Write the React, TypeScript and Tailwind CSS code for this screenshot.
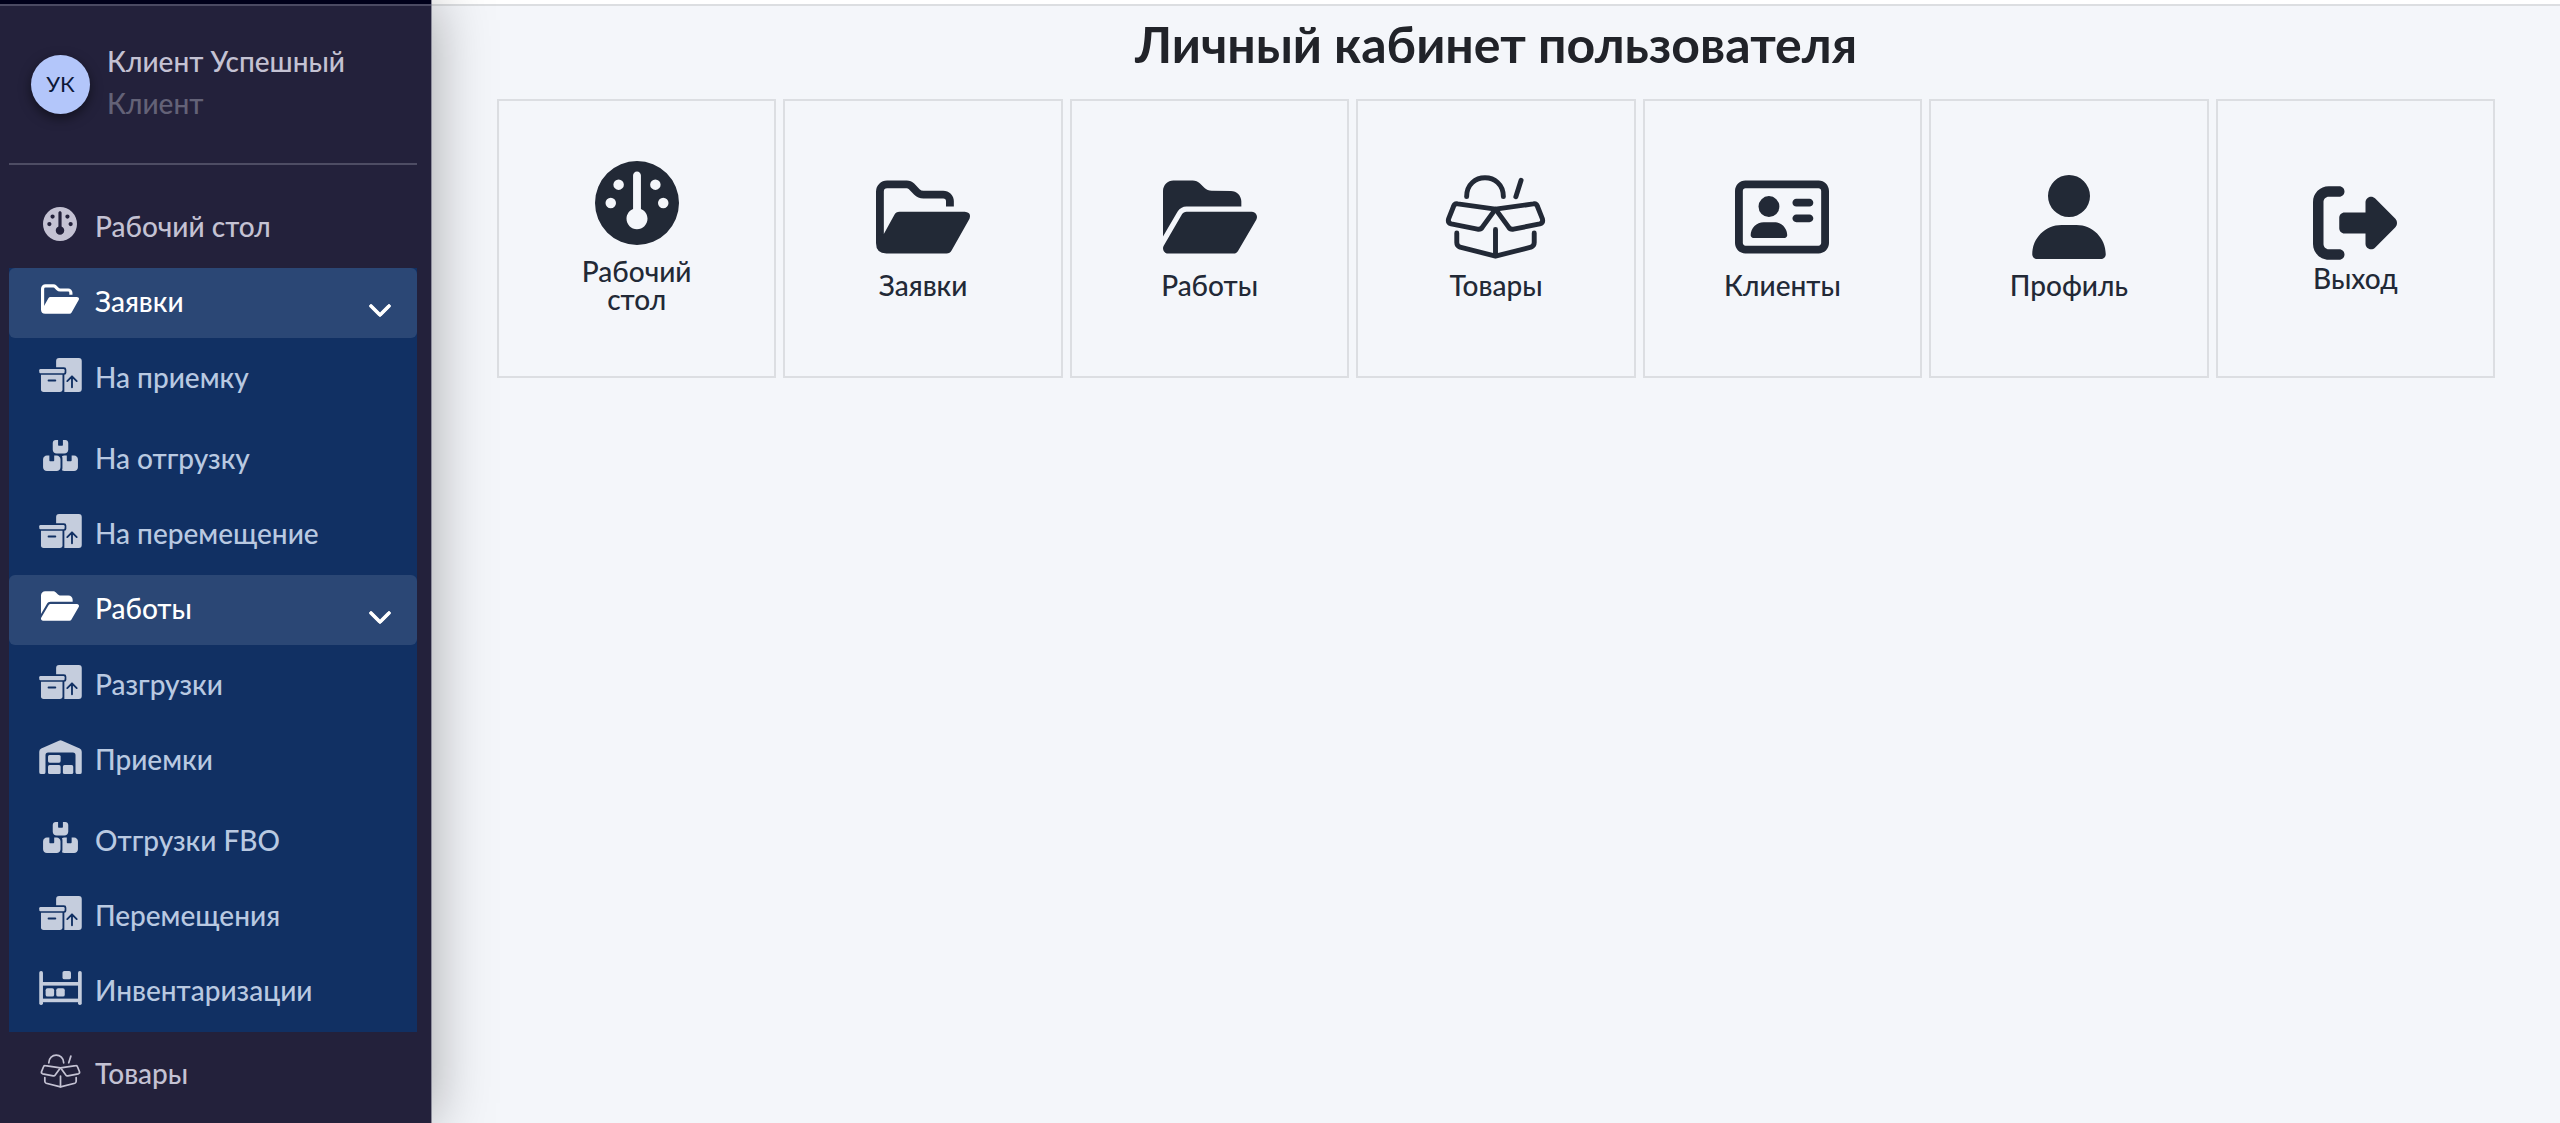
import { useState } from "react";
import type { ReactNode } from "react";
import {
  FaBoxesStacked,
  FaChevronDown,
  FaFolderOpen,
  FaGauge,
  FaRegAddressCard,
  FaRightFromBracket,
  FaUser,
} from "react-icons/fa6";

type IconProps = { className?: string };

function FolderOutline({ className }: IconProps) {
  return (
    <svg viewBox="0 0 576 512" className={className} fill="currentColor" aria-hidden="true">
      <path
        d="M24 410V100a44 44 0 0 1 44-44H188q17 0 29 12L250 102q17 17 41 17H412a41 41 0 0 1 41 41v32"
        fill="none"
        stroke="currentColor"
        strokeWidth="48"
      />
      <path d="M48 360L112 243Q122 224 144 224H544Q586 228 573 266L464 460Q453 480 432 480H64Q0 480 0 416V370Z" />
    </svg>
  );
}

function OpenBox({ className }: IconProps) {
  return (
    <svg
      viewBox="48 44 304 256"
      className={className}
      fill="none"
      stroke="currentColor"
      strokeLinecap="round"
      strokeLinejoin="round"
      aria-hidden="true"
    >
      <path d="M112 110C112 33 224 33 224 110" />
      <path d="M278 60L262 110" />
      <path d="M200 148L85 132Q75 130 72 140L57 178Q54 190 65 193L145 209Q155 211 160 203Z" />
      <path d="M200 148L315 132Q325 130 328 140L343 178Q346 190 335 193L255 209Q245 211 240 203Z" />
      <path d="M82 221V250Q82 260 92 264L200 291L308 264Q318 260 318 250V221" />
      <path d="M200 210V290" />
    </svg>
  );
}

function Packages({ className }: IconProps) {
  return (
    <svg viewBox="0 0 640 512" className={className} fill="currentColor" aria-hidden="true">
      <path d="M254 140V44Q254 0 298 0H596Q640 0 640 44V468Q640 512 596 512H378V254Q408 250 408 222V176Q408 140 372 140Z" />
      <rect x="0" y="166" width="382" height="62" rx="18" />
      <path d="M26 252H350V472Q350 512 310 512H66Q26 512 26 472Z" />
      <g stroke="#113063" strokeWidth="28" strokeLinecap="round" strokeLinejoin="round" fill="none">
        <path d="M140 338H242" />
        <path d="M493 440V278M422 348L493 276L564 348" />
      </g>
    </svg>
  );
}

function Warehouse({ className }: IconProps) {
  return (
    <svg viewBox="0 0 640 512" className={className} fill="currentColor" aria-hidden="true">
      <path d="M0 484V176Q0 142 30 128L296 10Q320 0 344 10L610 128Q640 142 640 176V484Q640 512 612 512H574Q546 512 546 484V230Q546 190 506 190H134Q94 190 94 230V484Q94 512 66 512H28Q0 512 0 484Z" />
      <rect x="132" y="224" width="190" height="118" rx="24" />
      <rect x="132" y="378" width="190" height="134" rx="24" />
      <rect x="356" y="378" width="156" height="134" rx="24" />
    </svg>
  );
}

function Shelves({ className }: IconProps) {
  return (
    <svg viewBox="0 0 640 512" className={className} fill="currentColor" aria-hidden="true">
      <rect x="0" y="0" width="56" height="512" rx="26" />
      <rect x="584" y="0" width="56" height="512" rx="26" />
      <rect x="28" y="166" width="584" height="54" />
      <rect x="28" y="416" width="584" height="54" />
      <rect x="350" y="0" width="128" height="124" rx="28" />
      <rect x="96" y="260" width="128" height="124" rx="28" />
      <rect x="256" y="260" width="128" height="124" rx="28" />
    </svg>
  );
}

function Row({ icon, children }: { icon: ReactNode; children: ReactNode }) {
  return (
    <span className="flex h-[61px] items-center gap-[13px] pl-[29px]">
      <span className="flex w-11 shrink-0 justify-center">{icon}</span>
      <span className="mt-1">{children}</span>
    </span>
  );
}

type Item = { label: string; icon: ReactNode; tall?: boolean };

const wideIcon = "h-[34px] w-[43px] text-[#c5cddd]";
const stack = <FaBoxesStacked className="h-[31px] w-[35px] text-[#c5cddd]" />;

const requests: Item[] = [
  { label: "На приемку", icon: <Packages className={wideIcon} /> },
  { label: "На отгрузку", icon: stack, tall: true },
  { label: "На перемещение", icon: <Packages className={wideIcon} /> },
];

const works: Item[] = [
  { label: "Разгрузки", icon: <Packages className={wideIcon} /> },
  { label: "Приемки", icon: <Warehouse className={wideIcon} /> },
  { label: "Отгрузки FBO", icon: stack, tall: true },
  { label: "Перемещения", icon: <Packages className={wideIcon} /> },
  { label: "Инвентаризации", icon: <Shelves className={wideIcon} /> },
];

function Group({ title, icon, items }: { title: string; icon: ReactNode; items: Item[] }) {
  const [open, setOpen] = useState(true);
  return (
    <div className="bg-[#113063]">
      <button
        type="button"
        aria-expanded={open}
        onClick={() => setOpen(!open)}
        className="flex h-[70px] w-full cursor-pointer items-start justify-between rounded-md bg-[#2b4775] pr-[25px] text-left text-white"
      >
        <Row icon={icon}>{title}</Row>
        <FaChevronDown className="mt-[29px] size-6 stroke-white stroke-[20]" />
      </button>
      {open && (
        <ul className="pb-[6px] text-[#b9c9e1]">
          {items.map((item) => (
            <li key={item.label}>
              <a href="#" className={item.tall ? "block pt-3 pb-2" : "block pt-[6px] pb-2"}>
                <Row icon={item.icon}>{item.label}</Row>
              </a>
            </li>
          ))}
        </ul>
      )}
    </div>
  );
}

const wideTile = "h-[84px] w-[94px]";

const tiles: { label: string; icon: ReactNode; tight?: boolean }[] = [
  { label: "Рабочий стол", icon: <FaGauge className="size-[84px]" /> },
  { label: "Заявки", icon: <FolderOutline className={wideTile} /> },
  { label: "Работы", icon: <FaFolderOpen className={wideTile} /> },
  { label: "Товары", icon: <OpenBox className="h-[84px] w-[101px] stroke-15" /> },
  { label: "Клиенты", icon: <FaRegAddressCard className={wideTile} /> },
  { label: "Профиль", icon: <FaUser className="h-[84px] w-[74px]" /> },
  {
    label: "Выход",
    icon: <FaRightFromBracket className="h-[74px] w-[84px]" preserveAspectRatio="xMidYMid slice" />,
    tight: true,
  },
];

export default function App() {
  return (
    <div className="flex min-h-screen bg-[#f4f6fa] font-['Lato',sans-serif] text-[28px] font-medium">
      <aside className="relative z-10 w-[432px] shrink-0 border-r border-[#8d8d9b] bg-[#23213b] text-[#c4c2d3] shadow-[0_0_56px_rgba(0,0,0,0.34)]">
        <div className="h-1 bg-[#00001a]" />
        <div className="h-[2px] bg-[#4b4a62]" />
        <div className="flex items-center gap-[17px] pt-[34px] pb-[39px] pl-[31px] leading-[42px]">
          <span className="mt-1 flex size-[59px] shrink-0 items-center justify-center rounded-full bg-[#b3c6fa] text-[22px] font-normal text-[#0c1736] shadow-[0_4px_12px_rgba(0,0,0,0.5)]">
            УК
          </span>
          <div>
            <p>Клиент Успешный</p>
            <p className="text-[#636277]">Клиент</p>
          </div>
        </div>
        <nav className="pr-[14px] pl-[9px]">
          <hr className="border-t-2 border-[#4e4d64]" />
          <a href="#" className="mt-7 block pb-[14px]">
            <Row icon={<FaGauge className="size-[34px]" />}>Рабочий стол</Row>
          </a>
          <Group title="Заявки" icon={<FolderOutline className="h-[34px] w-[38px]" />} items={requests} />
          <Group title="Работы" icon={<FaFolderOpen className="h-[34px] w-[38px]" />} items={works} />
          <a href="#" className="block pt-2">
            <Row icon={<OpenBox className="h-[34px] w-[41px] stroke-13" />}>Товары</Row>
          </a>
        </nav>
      </aside>
      <main className="min-w-0 flex-1 text-[#222936]">
        <div className="h-1 bg-white" />
        <div className="h-[2px] bg-[#dcdee1]" />
        <h1 className="pt-2 text-center text-[50px] leading-[60px] font-bold text-[#212329]">
          Личный кабинет пользователя
        </h1>
        <div className="mt-[25px] grid grid-cols-7 gap-[7px] px-[65px]">
          {tiles.map((tile) => (
            <a
              key={tile.label}
              href="#"
              className="flex aspect-square flex-col items-center justify-center border-2 border-[#dcdee2] px-16 pb-[3px]"
            >
              {tile.icon}
              <span className={tile.tight ? "mt-1 -mb-1 text-center leading-7" : "mt-3 text-center leading-7"}>
                {tile.label}
              </span>
            </a>
          ))}
        </div>
      </main>
    </div>
  );
}
